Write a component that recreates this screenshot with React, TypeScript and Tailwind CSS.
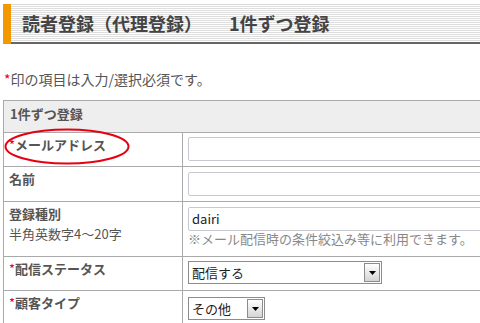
import React from "react";

function Req() {
  return <span className="text-[#e60012] font-normal">*</span>;
}

function Select({ value, w }: { value: string; w: string }) {
  return (
    <div className={`flex h-[23px] ${w} border border-[#8c8c8c] bg-white`}>
      <div className="flex-1 pl-[3px] text-[13px] leading-[21px] text-[#222]">{value}</div>
      <div className="m-[1px] flex w-[16px] items-center justify-center border border-[#8c8c8c] bg-gradient-to-b from-white to-[#d4d4d4]">
        <svg width="7" height="4" viewBox="0 0 7 4">
          <polygon points="0,0 7,0 3.5,4" fill="#000" />
        </svg>
      </div>
    </div>
  );
}

export default function App() {
  return (
    <div className="relative h-[323px] w-[480px] overflow-hidden bg-white font-['Noto_Sans_CJK_JP','Meiryo',sans-serif] text-[#555]">
      <div className="ml-[3px] mt-[4px] flex h-[40px]">
        <div className="w-[8px] bg-[#f39800]" />
        <div className="flex flex-1 items-center border-t border-b-2 border-t-[#d8d8d8] border-b-[#666] bg-[repeating-linear-gradient(to_bottom,#ffffff_0px,#ffffff_1px,#dedede_1px,#dedede_2px)] pl-[11px]">
          <span className="whitespace-nowrap text-[18px] font-bold text-[#444]">
            読者登録（代理登録）<span className="ml-[27px]">1件ずつ登録</span>
          </span>
        </div>
      </div>

      <p className="mt-[25px] pl-[4px] text-[14px] leading-[20px] text-[#555]">
        <Req />印の項目は入力/選択必須です。
      </p>

      <div className="ml-[3px] mt-[11px] w-[520px] border-l border-t border-[#aaa] text-[13px] leading-[20px]">
        <div className="h-[32px] border-b border-[#aaa] bg-[#eeeeee] pl-[6px] pt-[3px] font-bold">
          1件ずつ登録
        </div>

        <div className="flex h-[34px] border-b border-[#aaa]">
          <div className="w-[179px] border-r border-[#aaa] pl-[5px] pt-[2px] font-bold">
            <Req />メールアドレス
          </div>
          <div className="flex-1 pl-[5px] pt-[4px]">
            <div className="h-[24px] w-[320px] rounded-[2px] border border-[#c8c8d0] bg-white" />
          </div>
        </div>

        <div className="flex h-[35px] border-b border-[#aaa]">
          <div className="w-[179px] border-r border-[#aaa] pl-[5px] pt-[2px] font-bold">名前</div>
          <div className="flex-1 pl-[5px] pt-[5px]">
            <div className="h-[24px] w-[320px] rounded-[2px] border border-[#c8c8d0] bg-white" />
          </div>
        </div>

        <div className="flex h-[55px] border-b border-[#aaa]">
          <div className="w-[179px] border-r border-[#aaa] pl-[5px] pt-[2px]">
            <div className="font-bold">登録種別</div>
            <div>半角英数字4〜20字</div>
          </div>
          <div className="flex-1 pl-[5px] pt-[5px]">
            <div className="h-[24px] w-[320px] rounded-[2px] border border-[#c8c8d0] bg-white pl-[3px] text-[13px] leading-[22px] text-[#222]">
              dairi
            </div>
            <div className="whitespace-nowrap leading-[16px] text-[#888]">
              ※メール配信時の条件絞込み等に利用できます。
            </div>
          </div>
        </div>

        <div className="flex h-[34px] border-b border-[#aaa]">
          <div className="w-[179px] border-r border-[#aaa] pl-[5px] pt-[2px] font-bold">
            <Req />配信ステータス
          </div>
          <div className="flex-1 pl-[5px] pt-[4px]">
            <Select value="配信する" w="w-[194px]" />
          </div>
        </div>

        <div className="flex h-[40px]">
          <div className="w-[179px] border-r border-[#aaa] pl-[5px] pt-[2px] font-bold">
            <Req />顧客タイプ
          </div>
          <div className="flex-1 pl-[5px] pt-[6px]">
            <Select value="その他" w="w-[77px]" />
          </div>
        </div>
      </div>

      <svg
        className="pointer-events-none absolute left-[4px] top-[128px]"
        width="126"
        height="37"
        viewBox="0 0 126 37"
      >
        <ellipse cx="63" cy="18.5" rx="61.5" ry="17" fill="none" stroke="#e60012" strokeWidth="2" />
      </svg>
    </div>
  );
}
